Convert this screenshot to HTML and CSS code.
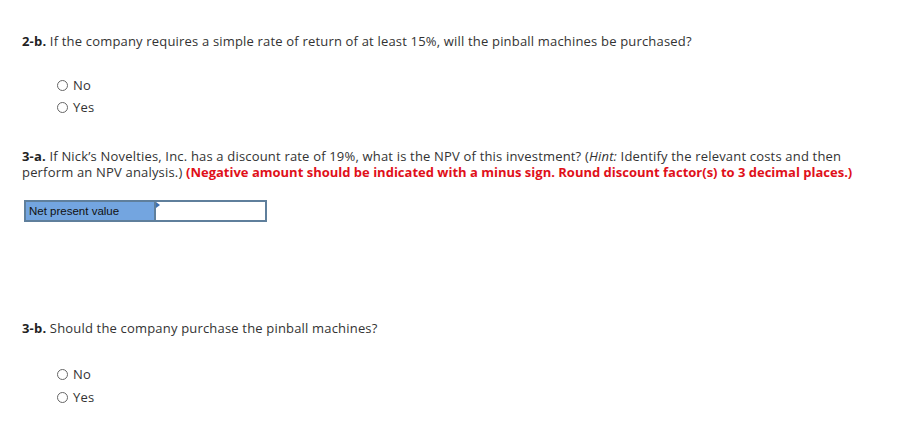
FILE: index.html
```html
<!DOCTYPE html>
<html>
<head>
<meta charset="utf-8">
<link rel="stylesheet" href="styles.css">
</head>
<body>
<div class="page">
  <section class="q q1">
    <p class="prompt"><b>2-b.</b> If the company requires a simple rate of return of at least 15%, will the pinball machines be purchased?</p>
    <div class="choices">
      <label class="choice"><span class="radio"></span>No</label>
      <label class="choice"><span class="radio"></span>Yes</label>
    </div>
  </section>
  <section class="q q2">
    <p class="prompt"><b>3-a.</b> If Nick’s Novelties, Inc. has a discount rate of 19%, what is the NPV of this investment? (<i>Hint:</i> Identify the relevant costs and then perform an NPV analysis.) <b class="red">(Negative amount should be indicated with a minus sign. Round discount factor(s) to 3 decimal places.)</b></p>
    <div class="table">
      <div class="label">Net present value</div>
      <div class="input"><span class="flag"></span></div>
    </div>
  </section>
  <section class="q q3">
    <p class="prompt"><b>3-b.</b> Should the company purchase the pinball machines?</p>
    <div class="choices choices2">
      <label class="choice"><span class="radio"></span>No</label>
      <label class="choice"><span class="radio"></span>Yes</label>
    </div>
  </section>
</div>
</body>
</html>
```

FILE: styles.css
```css
html, body { margin: 0; padding: 0; background: #fff; }
body {
  font-family: "Open Sans", "Liberation Sans", sans-serif;
  font-size: 13px;
  letter-spacing: 0.18px;
  color: #333;
}
.page { padding: 33px 22px 0 22px; width: 858px; }
.prompt { margin: 0; line-height: 16px; }
.prompt b { font-weight: 700; color: #222; }
.prompt .red { color: #e0101a; letter-spacing: 0; }
.choices { display: flex; flex-direction: column; gap: 6px; padding-left: 35px; margin-top: 28px; }
.choices2 { margin-top: 30px; gap: 7px; }
.choice { display: flex; align-items: center; gap: 5px; height: 16px; }
.radio {
  width: 11px; height: 11px; border: 1px solid #666; border-radius: 50%; box-sizing: border-box;
}
.q2 { margin-top: 33px; }
.table {
  display: flex; margin-top: 20px; margin-left: 2px;
  width: 243px; height: 22px; border: 2px solid #5f7f9c; box-sizing: border-box;
}
.label {
  width: 130px; background: #73a5e0; border-right: 2px solid #5f7f9c;
  font-family: "Liberation Sans", Arial, sans-serif; font-size: 11.5px; letter-spacing: 0; color: #111;
  line-height: 18px; padding-left: 3px; box-sizing: border-box;
}
.input { flex: 1; background: #fff; position: relative; }
.flag {
  position: absolute; left: 0; top: 0; width: 0; height: 0;
  border-top: 3px solid transparent; border-bottom: 3px solid transparent; border-left: 4px solid #3b6fb0;
}
.q3 { margin-top: 98px; }
```
